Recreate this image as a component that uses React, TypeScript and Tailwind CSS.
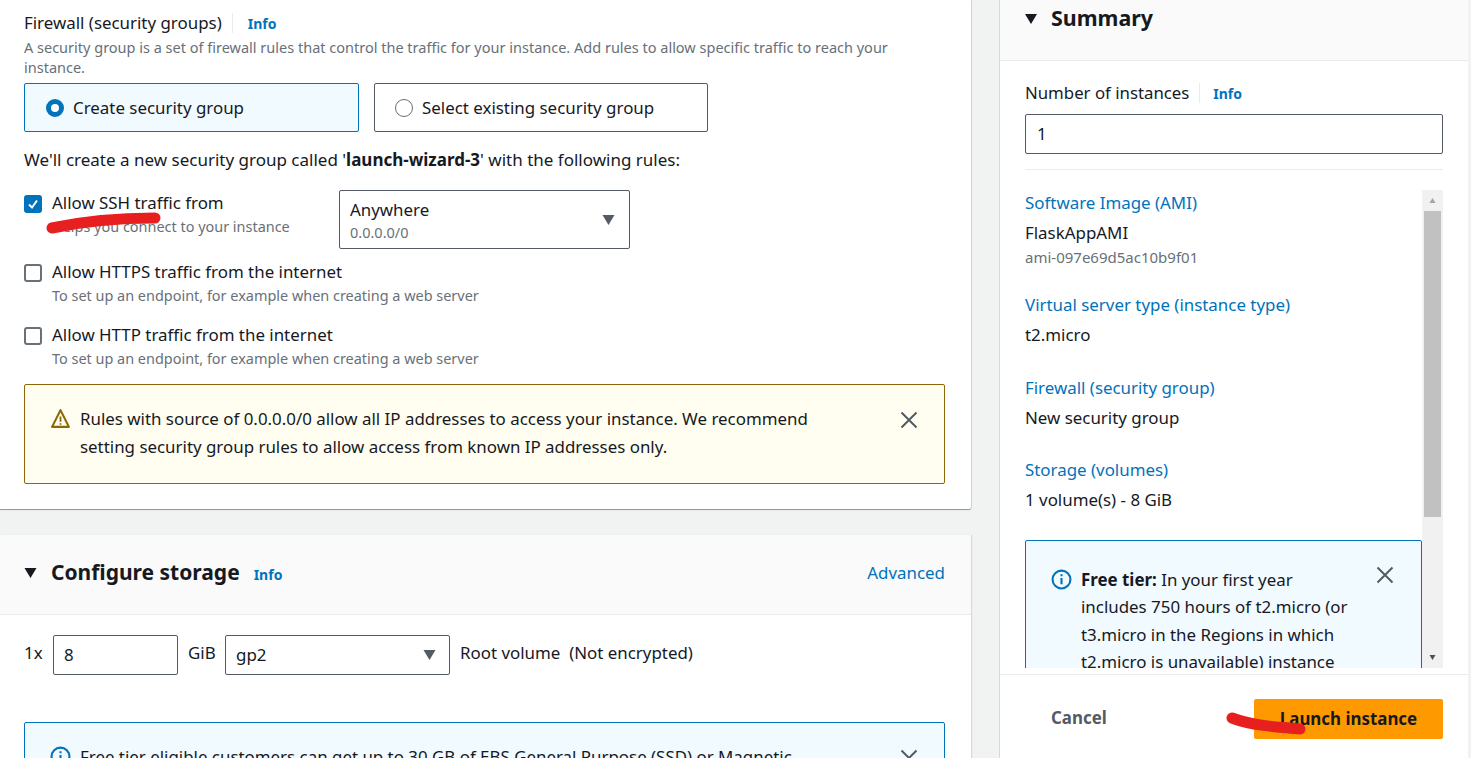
const font = "font-['Noto_Sans',sans-serif]";

function Arrow({ className }: { className: string }) {
  return (
    <svg viewBox="0 0 12 10" className={className}>
      <path d="M0 0h12L6 10z" fill="currentColor" />
    </svg>
  );
}

function CloseIcon({ className }: { className: string }) {
  return (
    <svg viewBox="0 0 18 18" className={`h-[18px] w-[18px] shrink-0 text-[#545b64] ${className}`}>
      <path d="M1.5 1.5l15 15M16.5 1.5l-15 15" fill="none" stroke="currentColor" strokeWidth="2" />
    </svg>
  );
}

function InfoLink({ className = "" }: { className?: string }) {
  return <span className={`text-[14px] font-bold text-[#0073bb] ${className}`}>Info</span>;
}

function CheckRow({ label, hint, checked }: { label: string; hint: string; checked?: boolean }) {
  return (
    <div className="flex gap-[10px]">
      <div
        className={`mt-[3px] flex h-[18px] w-[18px] items-center justify-center rounded-[3px] border-2 ${
          checked ? "border-[#0073bb] bg-[#0073bb]" : "border-[#687078] bg-white"
        }`}
      >
        {checked && (
          <svg viewBox="0 0 14 14" className="h-[14px] w-[14px]">
            <path d="M3 7.5l3 3 5-7" fill="none" stroke="white" strokeWidth="2" />
          </svg>
        )}
      </div>
      <div>
        <div className="text-[16.9px] leading-[22px] text-[#16191f]">{label}</div>
        <div className="mt-[3px] text-[14.45px] leading-[20px] text-[#687078]">{hint}</div>
      </div>
    </div>
  );
}

function SummaryItem({ title, value, sub, className = "" }: { title: string; value: string; sub?: string; className?: string }) {
  return (
    <div className={className}>
      <div className="text-[16.9px] leading-[22px] text-[#0073bb]">{title}</div>
      <div className="mt-[8px] text-[16.9px] leading-[22px] text-[#16191f]">{value}</div>
      {sub && <div className="mt-[3px] text-[15px] leading-[20px] text-[#687078]">{sub}</div>}
    </div>
  );
}

function InfoIcon() {
  return (
    <svg viewBox="0 0 20 20" className="mt-[3px] h-[21px] w-[21px] shrink-0 text-[#0073bb]" fill="none" stroke="currentColor" strokeWidth="2">
      <circle cx="10" cy="10" r="8.5" />
      <path d="M10 8.5v6M10 5v2" />
    </svg>
  );
}

export default function App() {
  return (
    <div className={`relative flex h-[758px] w-[1471px] overflow-hidden bg-[#f1f3f3] ${font}`}>
      <div className="w-[971px] shrink-0">
        {/* firewall section */}
        <div className="h-[509px] rounded-br-[2px] bg-white pl-[24px] pr-[26px] pt-[11px] shadow-[0_1px_1px_#879596,1px_0_1px_#d5dbdb]">
          <div className="flex h-[24px] items-center">
            <span className="text-[16.9px] leading-[22px] text-[#16191f]">Firewall (security groups)</span>
            <span className="ml-[10px] h-[20px] border-l border-[#e9ebed]" />
            <InfoLink className="ml-[15px]" />
          </div>
          <p className="mt-[2px] w-[880px] text-[14.5px] leading-[20px] text-[#687078]">
            A security group is a set of firewall rules that control the traffic for your instance. Add rules to allow specific traffic to reach your instance.
          </p>
          <div className="mt-[6px] flex gap-[15px]">
            <div className="flex h-[49px] w-[335px] items-center gap-[9px] rounded-[2px] border border-[#0073bb] bg-[#f1faff] pl-[21px]">
              <span className="h-[18px] w-[18px] rounded-full border-[5px] border-[#0073bb] bg-white" />
              <span className="text-[16.9px] text-[#16191f]">Create security group</span>
            </div>
            <div className="flex h-[49px] w-[334px] items-center gap-[9px] rounded-[2px] border border-[#545b64] bg-white pl-[20px]">
              <span className="h-[18px] w-[18px] rounded-full border border-[#687078]" />
              <span className="text-[16.9px] text-[#16191f]">Select existing security group</span>
            </div>
          </div>
          <p className="mt-[17px] text-[17px] leading-[22px] text-[#16191f]">
            We'll create a new security group called '<b>launch-wizard-3</b>' with the following rules:
          </p>
          <div className="mt-[20px] flex items-start">
            <div className="mt-[1px] w-[315px]">
              <CheckRow checked label="Allow SSH traffic from" hint="Helps you connect to your instance" />
            </div>
            <div className="-mt-[1px] flex h-[59px] w-[291px] items-center justify-between rounded-[2px] border border-[#545b64] pl-[10px] pr-[14px]">
              <div>
                <div className="text-[16.9px] leading-[24px] text-[#16191f]">Anywhere</div>
                <div className="text-[14.5px] leading-[20px] text-[#687078]">0.0.0.0/0</div>
              </div>
              <Arrow className="h-[10px] w-[13px] text-[#545b64]" />
            </div>
          </div>
          <div className="mt-[12px]">
            <CheckRow label="Allow HTTPS traffic from the internet" hint="To set up an endpoint, for example when creating a web server" />
          </div>
          <div className="mt-[18px]">
            <CheckRow label="Allow HTTP traffic from the internet" hint="To set up an endpoint, for example when creating a web server" />
          </div>
          <div className="mt-[15px] flex h-[100px] items-start justify-between rounded-[2px] border border-[#8d6605] bg-[#fffef0] pl-[25px] pr-[26px] pt-[20px]">
            <div className="flex gap-[9px]">
              <svg viewBox="0 0 20 20" className="mt-[3px] h-[21px] w-[21px] shrink-0 text-[#8d6605]" fill="none" stroke="currentColor" strokeWidth="2">
                <path d="M10 2 L18 18 H2 Z" strokeLinejoin="round" />
                <path d="M10 8v5M10 14.5v1.5" strokeWidth="1.7" />
              </svg>
              <p className="text-[16.9px] leading-[28px] text-[#16191f]">
                Rules with source of 0.0.0.0/0 allow all IP addresses to access your instance. We recommend
                <br />
                setting security group rules to allow access from known IP addresses only.
              </p>
            </div>
            <CloseIcon className="mt-[6px]" />
          </div>
        </div>

        {/* storage section */}
        <div className="mt-[26px] h-[223px] bg-white shadow-[1px_0_1px_#d5dbdb]">
          <div className="flex h-[80px] items-center justify-between border-b border-[#e9ebed] bg-[#fafafa] pb-[4px] pl-[24px] pr-[26px]">
            <div className="flex items-center">
              <Arrow className="h-[10px] w-[13px] text-[#16191f]" />
              <span className="ml-[14px] text-[21px] font-bold text-[#16191f]">Configure storage</span>
              <InfoLink className="ml-[14px] mt-[3px]" />
            </div>
            <span className="text-[16.9px] text-[#0073bb]">Advanced</span>
          </div>
          <div className="flex items-start pl-[24px] pr-[26px] pt-[20px] text-[16.9px] text-[#16191f]">
            <span className="mt-[5px] w-[29px]">1x</span>
            <div className="flex h-[40px] w-[125px] items-center rounded-[2px] border border-[#545b64] pl-[10px]">8</div>
            <span className="ml-[10px] mt-[5px] w-[37px]">GiB</span>
            <div className="flex h-[40px] w-[225px] items-center justify-between rounded-[2px] border border-[#545b64] pl-[10px] pr-[13px]">
              gp2
              <Arrow className="h-[10px] w-[13px] text-[#545b64]" />
            </div>
            <span className="ml-[10px] mt-[5px]">Root volume&nbsp; (Not encrypted)</span>
          </div>
          <div className="ml-[24px] mr-[26px] mt-[47px] flex h-[100px] justify-between rounded-[2px] border border-[#0073bb] bg-[#f1faff] pl-[25px] pr-[26px] pt-[20px]">
            <div className="flex gap-[9px]">
              <InfoIcon />
              <p className="whitespace-nowrap text-[16.9px] leading-[28px] text-[#16191f]">
                Free tier eligible customers can get up to 30 GB of EBS General Purpose (SSD) or Magnetic
              </p>
            </div>
            <CloseIcon className="mt-[6px]" />
          </div>
        </div>
      </div>

      {/* summary panel */}
      <div className="ml-[28px] flex h-[758px] w-[469px] flex-col border-l border-[#d5dbdb] bg-white">
        <div className="flex h-[61px] items-start border-b border-[#e9ebed] bg-[#fafafa] pl-[25px]">
          <Arrow className="mt-[14px] h-[10px] w-[12px] text-[#16191f]" />
          <span className="ml-[14px] text-[21.4px] font-bold leading-[36px] text-[#16191f]">Summary</span>
        </div>
        <div className="pl-[25px] pr-[25px] pt-[21px]">
          <div className="flex h-[22px] items-center">
            <span className="text-[16.8px] text-[#16191f]">Number of instances</span>
            <span className="ml-[10px] h-[20px] border-l border-[#e9ebed]" />
            <InfoLink className="ml-[13px]" />
          </div>
          <div className="mt-[10px] flex h-[40px] items-center rounded-[2px] border border-[#545b64] pl-[11px] text-[16.9px] text-[#16191f]">1</div>
          <div className="mt-[15px] border-t border-[#e9ebed]" />
          <div className="mt-[20px] flex h-[478px] overflow-hidden">
            <div className="w-[397px]">
              <SummaryItem title="Software Image (AMI)" value="FlaskAppAMI" sub="ami-097e69d5ac10b9f01" className="pt-[2px]" />
              <SummaryItem title="Virtual server type (instance type)" value="t2.micro" className="mt-[27px]" />
              <SummaryItem title="Firewall (security group)" value="New security group" className="mt-[31px]" />
              <SummaryItem title="Storage (volumes)" value="1 volume(s) - 8 GiB" className="mt-[30px]" />
              <div className="mt-[29px] flex h-[200px] justify-between rounded-t-[2px] border border-[#0073bb] bg-[#f1faff] pl-[25px] pr-[27px] pt-[25px]">
                <div className="flex gap-[9px]">
                  <InfoIcon />
                  <p className="w-[278px] text-[16.9px] leading-[27.3px] text-[#16191f]">
                    <b>Free tier:</b> In your first year includes 750 hours of t2.micro (or t3.micro in the Regions in which t2.micro is unavailable) instance
                  </p>
                </div>
                <CloseIcon className="" />
              </div>
            </div>
            <div className="flex w-[21px] flex-col items-center bg-[#f1f1f1]">
              <div className="flex h-[21px] items-center">
                <Arrow className="h-[5px] w-[9px] rotate-180 text-[#a3a3a3]" />
              </div>
              <div className="h-[306px] w-[17px] bg-[#c1c1c1]" />
              <div className="flex-1" />
              <div className="flex h-[21px] items-center">
                <Arrow className="h-[5px] w-[9px] text-[#505050]" />
              </div>
            </div>
          </div>
        </div>
        <div className="mt-[6px] flex flex-1 items-start justify-between border-t border-[#e9ebed] pl-[51px] pr-[25px] pt-[24px]">
          <span className="mt-[6px] text-[16.9px] font-bold text-[#545b64]">Cancel</span>
          <div className="flex h-[40px] w-[189px] items-center justify-center rounded-[2px] bg-[#ff9900] text-[16.9px] font-bold text-[#16191f]">
            Launch instance
          </div>
        </div>
      </div>

      {/* red marker strokes drawn on the screenshot */}
      <svg viewBox="0 0 1471 758" className="pointer-events-none absolute left-0 top-0 h-[758px] w-[1471px]">
        <path d="M52 228 C80 222 120 218 155 218" fill="none" stroke="#e81f1f" strokeWidth="11" strokeLinecap="round" />
        <path d="M1232 718 C1250 725 1275 727 1300 729" fill="none" stroke="#e81f1f" strokeWidth="11" strokeLinecap="round" />
      </svg>
    </div>
  );
}
